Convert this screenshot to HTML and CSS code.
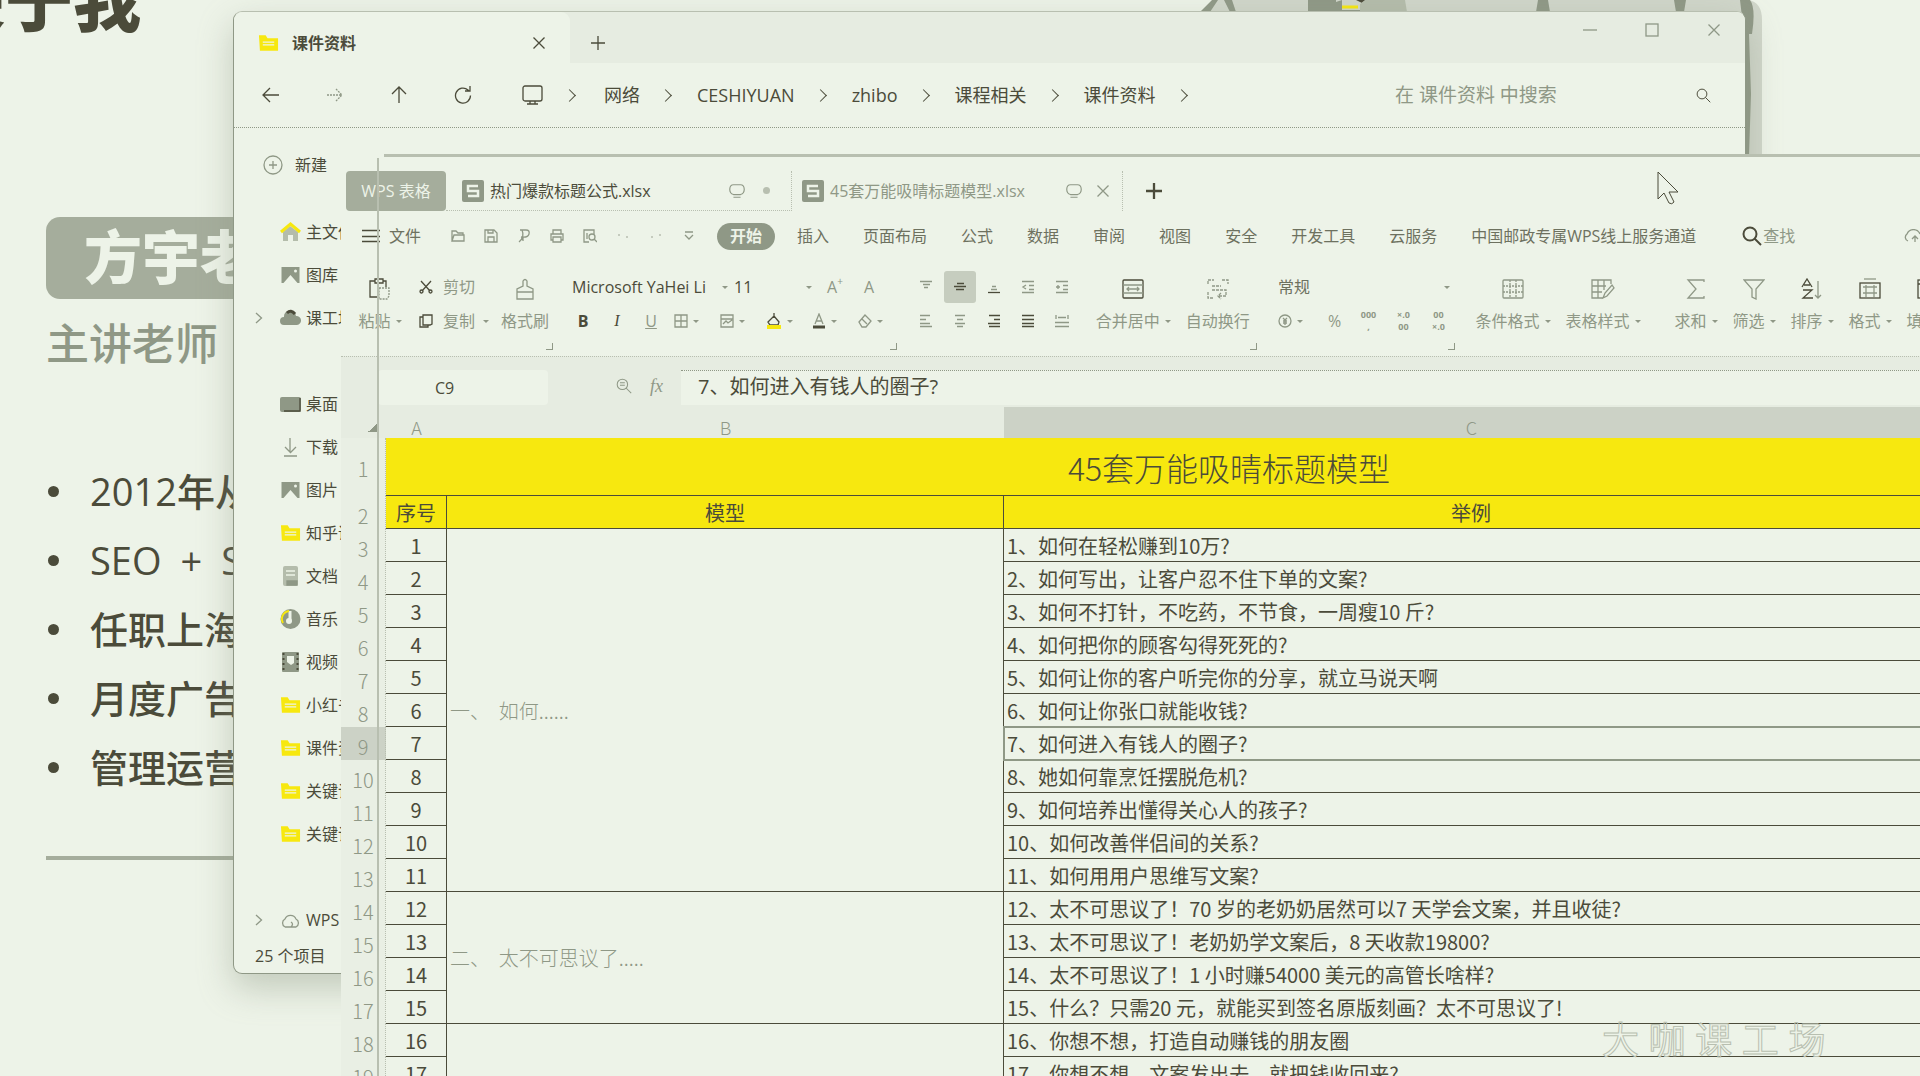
FILE: index.html
```html
<!DOCTYPE html>
<html lang="zh-CN">
<head>
<meta charset="utf-8">
<title>课件资料</title>
<link rel="stylesheet" href="styles.css">
</head>
<body>
<svg class="defs" aria-hidden="true">
  <symbol id="x" viewBox="0 0 14 14"><path d="M1.500 1.500l11 11M12.500 1.500l-11 11"/></symbol>
  <symbol id="plus" viewBox="0 0 14 14"><path d="M7 0v14M0 7h14"/></symbol>
  <symbol id="chev" viewBox="0 0 8 14"><path d="M1 2l5.500 5L1 12"/></symbol>
  <symbol id="folder" viewBox="0 0 22 18"><path fill="#f7e80f" stroke="none" d="M1 1h7l2 3h11v13H2z"/><path d="M5 8h12M5 11h12" stroke="#edf3e8"/></symbol>
  <symbol id="sheet" viewBox="0 0 22 22"><rect width="22" height="22" rx="2" fill="#8f9886" stroke="none"/><path d="M16 6H6v5h10v5H6" stroke="#edf3e8" stroke-width="2.500"/></symbol>
  <symbol id="monitor" viewBox="0 0 18 18"><path d="M5 13C-1 11 0 2 5 2h8c5 0 6 9 0 11zM5 16h8"/></symbol>
  <symbol id="lens" viewBox="0 0 20 20"><circle cx="8" cy="8" r="6.500"/><path d="M12.500 12.500L19 19"/></symbol>
  <symbol id="grid" viewBox="0 0 22 22"><rect x="1" y="2" width="20" height="18" rx="1"/><path d="M1 8h20M1 14h20M8 2v18M14 2v18" stroke-dasharray="2 1"/></symbol>
  <symbol id="picture" viewBox="0 0 20 20"><path fill="#8f9886" stroke="none" d="M1 2h18v16H1z"/><path fill="#edf3e8" stroke="none" d="M3 18l7-8 7 8z"/><circle cx="15" cy="6" r="1.500" fill="#edf3e8" stroke="none"/></symbol>
</svg>

<main class="desktop">
  <section class="slide">
    <h1>关于我</h1>
    <p class="badge">方宇老师</p>
    <p class="role">主讲老师</p>
    <ul>
      <li>2012年从</li>
      <li>SEO&ensp;+&ensp;S</li>
      <li>任职上海</li>
      <li>月度广告</li>
      <li>管理运营</li>
    </ul>
    <hr>
    <svg class="scene" viewBox="0 0 562 156" aria-hidden="true">
      <path d="M0 12L14 0h534q14 2 14 20v136h-18V12z" fill="#d0d6ca"/>
      <path d="M0 12L12 0h6L10 12zM24 0h8l4 12h-6zM108 0h28v12h-28zM136 2l6-2v10h18v2h-24zM338 0h10l2 12h-14zM474 0h12l-2 12h-8zM540 0h10q6 8 2 34h-8zM544 34h5l2 60-2 62h-5z" fill="#8f9886"/>
      <path d="M156 0h10l-4 3z" fill="#4b4b3a"/><path d="M142 7h16" stroke="#f7e80f" stroke-width="3"/>
      <path d="M160 4l5-4h40l2 12h-47z" fill="#b4bcab"/>
    </svg>
  </section>

  <section class="explorer">
    <header class="ex-title">
      <div class="ex-tab">
        <svg class="i" width="21" height="18"><use href="#folder"/></svg>
        <b>课件资料</b>
        <button aria-label="关闭标签页"><svg class="i dark" width="14" height="14"><use href="#x"/></svg></button>
      </div>
      <button class="new-tab" aria-label="新建标签页"><svg class="i dark" width="14" height="14"><use href="#plus"/></svg></button>
      <div class="win-btns">
        <button aria-label="最小化"><svg class="i" width="14" height="14" viewBox="0 0 14 14"><path d="M0 7h14"/></svg></button>
        <button aria-label="最大化"><svg class="i" width="14" height="14" viewBox="0 0 14 14"><rect x="1" y="1" width="12" height="12"/></svg></button>
        <button aria-label="关闭"><svg class="i" width="14" height="14"><use href="#x"/></svg></button>
      </div>
    </header>
    <nav class="ex-nav">
      <div class="arrows">
        <button aria-label="后退"><svg class="i dark" width="18" height="16" viewBox="0 0 18 16"><path d="M17 8H1M8 1L1 8l7 7"/></svg></button>
        <button aria-label="前进"><svg class="i" width="16" height="14" viewBox="0 0 16 14"><path d="M0 7h15M9 1l6 6-6 6" stroke-dasharray="2 1"/></svg></button>
        <button aria-label="上移"><svg class="i dark" width="16" height="18" viewBox="0 0 16 18"><path d="M8 17V1M1 8l7-7 7 7"/></svg></button>
        <button aria-label="刷新"><svg class="i dark" width="18" height="18" viewBox="0 0 18 18"><path d="M16.500 9.500A7.500 7.500 0 1 1 14 4l1 1M16 0v5h-5"/></svg></button>
      </div>
      <ol class="crumbs">
        <li><svg class="i dark" width="21" height="20" viewBox="0 0 21 20"><rect x="1" y="1" width="19" height="15" rx="2"/><path d="M5 19h11M8 16v3M13 16v3"/></svg></li>
        <li><a href="#">网络</a></li>
        <li><a href="#">CESHIYUAN</a></li>
        <li><a href="#">zhibo</a></li>
        <li><a href="#">课程相关</a></li>
        <li><a href="#">课件资料</a></li>
      </ol>
      <label class="ex-search"><input aria-label="搜索" placeholder="在 课件资料 中搜索"><svg class="i dark" width="15" height="15"><use href="#lens"/></svg></label>
    </nav>
    <div class="ex-side">
      <button class="new"><svg class="i" width="20" height="20" viewBox="0 0 20 20"><circle cx="10" cy="10" r="9"/><path d="M10 6v8M6 10h8"/></svg>新建</button>
      <ul>
        <li><i></i><svg class="i" width="21" height="20" viewBox="0 0 21 20"><path d="M3 10l7-6 8 6v9h-5v-6H8v6H3z" fill="#b4bcab" stroke="none"/><path d="M1 10l9.500-8 9.500 8" stroke="#f7e80f" stroke-width="3"/></svg>主文件夹</li>
        <li><i></i><svg class="i" width="21" height="20"><use href="#picture"/></svg>图库</li>
        <li><svg class="i" width="8" height="14"><use href="#chev"/></svg><svg class="i" width="21" height="20" viewBox="0 0 21 20"><path d="M4 17a4 4 0 0 1 0-8 6 6 0 0 1 12-1 4.500 4.500 0 0 1 1 9z" fill="#8f9886" stroke="none"/><path d="M7 5q4-4 8 1" stroke="#4b4b3a" stroke-width="3"/></svg>课工场</li>
        <li class="gap"></li>
        <li><i></i><svg class="i" width="21" height="20" viewBox="0 0 21 20"><rect x="0" y="3" width="21" height="15" rx="2" fill="#8f9886" stroke="none"/><path d="M4 17h16V4" stroke="#4b4b3a"/></svg>桌面</li>
        <li><i></i><svg class="i" width="21" height="20" viewBox="0 0 21 20"><path d="M10 1v14M5 10l5.500 5.500L16 10M4 19h13"/></svg>下载</li>
        <li><i></i><svg class="i" width="21" height="20"><use href="#picture"/></svg>图片</li>
        <li><i></i><svg class="i" width="21" height="18"><use href="#folder"/></svg>知乎课</li>
        <li><i></i><svg class="i" width="21" height="20" viewBox="0 0 21 20"><rect x="3" width="15" height="20" rx="2" fill="#b4bcab" stroke="none"/><path d="M6 5h9M6 9h9" stroke="#edf3e8"/><path d="M7 15h10v4H7z" fill="#8f9886"/></svg>文档</li>
        <li><i></i><svg class="i" width="21" height="20" viewBox="0 0 21 20"><circle cx="10.500" cy="10" r="10" fill="#8f9886" stroke="none"/><path d="M10 2v9" stroke="#edf3e8" stroke-width="3"/><circle cx="9" cy="12" r="3" fill="#edf3e8" stroke="none"/><path d="M3 14a8 8 0 0 1 6-12" stroke="#f7e80f" stroke-width="2"/></svg>音乐</li>
        <li><i></i><svg class="i" width="21" height="20" viewBox="0 0 21 20"><rect x="2" width="17" height="20" rx="1" fill="#8f9886" stroke="none"/><path d="M7 4h7v7l-3 2-4-3z" fill="#edf3e8" stroke="none"/><path d="M3.500 1v18M17.500 1v18" stroke="#4b4b3a" stroke-dasharray="2 3" stroke-width="2"/></svg>视频</li>
        <li><i></i><svg class="i" width="21" height="18"><use href="#folder"/></svg>小红书</li>
        <li><i></i><svg class="i" width="21" height="18"><use href="#folder"/></svg>课件资料</li>
        <li><i></i><svg class="i" width="21" height="18"><use href="#folder"/></svg>关键词</li>
        <li><i></i><svg class="i" width="21" height="18"><use href="#folder"/></svg>关键词</li>
        <li class="gap"></li>
        <li><svg class="i" width="8" height="14"><use href="#chev"/></svg><svg class="i" width="21" height="20" viewBox="0 0 21 20"><path d="M5 17a4.500 4.500 0 0 1 0-8 6 6 0 0 1 11 0 4.500 4.500 0 0 1 0 8h-5q3-3 0-5M5 17h7"/></svg>WPS</li>
      </ul>
      <p>25 个项目</p>
    </div>
  </section>

  <section class="wps">
    <header class="tabs">
      <button class="home">WPS 表格</button>
      <div class="tab"><svg class="i" width="22" height="22"><use href="#sheet"/></svg><span>热门爆款标题公式.xlsx</span><svg class="i mon" width="16" height="16"><use href="#monitor"/></svg><em></em></div>
      <div class="tab on"><svg class="i" width="22" height="22"><use href="#sheet"/></svg><span>45套万能吸晴标题模型.xlsx</span><svg class="i mon" width="16" height="16"><use href="#monitor"/></svg><button aria-label="关闭"><svg class="i" width="14" height="14"><use href="#x"/></svg></button></div>
      <button class="add" aria-label="新建"><svg class="i dark bold" width="16" height="16" viewBox="0 0 14 14"><use href="#plus"/></svg></button>
    </header>

    <nav class="menu">
      <button class="file"><svg class="i dark" width="18" height="14" viewBox="0 0 18 14"><path d="M0 1.500h18M0 7.500h18M0 12.500h18"/></svg>文件</button>
      <div class="quick">
        <button aria-label="打开"><svg class="i" width="14" height="14" viewBox="0 0 14 14"><path d="M1 12V2h4l2 2h5v2M1 12l2-6h10v6z"/></svg></button>
        <button aria-label="保存"><svg class="i" width="14" height="14" viewBox="0 0 14 14"><path d="M1 1h9l3 3v9H1zM4 1v3h5V1M4 13V8h6v5"/></svg></button>
        <button aria-label="输出"><svg class="i" width="14" height="14" viewBox="0 0 14 14"><path d="M3 1h6q4 0 3 4t-8 3M5 1q3 7-3 12M6 8v4"/></svg></button>
        <button aria-label="打印"><svg class="i" width="14" height="14" viewBox="0 0 14 14"><path d="M3 5V1h8v4M3 11H1V5h12v6h-2M3 8h8v5H3z"/></svg></button>
        <button aria-label="预览"><svg class="i" width="14" height="14" viewBox="0 0 14 14"><path d="M6 13H1V1h10v4M4 4v6"/><circle cx="9" cy="8" r="3"/><path d="M11 10l3 3"/></svg></button>
        <button aria-label="撤销"><svg class="i faint" width="12" height="8" viewBox="0 0 12 8"><path d="M1 3h2M9 5h2"/></svg></button>
        <button aria-label="恢复"><svg class="i faint" width="12" height="8" viewBox="0 0 12 8"><path d="M1 5h2M9 3h2"/></svg></button>
        <button aria-label="更多"><svg class="i" width="10" height="10" viewBox="0 0 10 10"><path d="M1 1h8M1 4l4 4 4-4"/></svg></button>
      </div>
      <a class="pill" href="#">开始</a>
      <div class="links">
        <a href="#">插入</a><a href="#">页面布局</a><a href="#">公式</a><a href="#">数据</a><a href="#">审阅</a><a href="#">视图</a><a href="#">安全</a><a href="#">开发工具</a><a href="#">云服务</a><a href="#">中国邮政专属WPS线上服务通道</a>
      </div>
      <button class="find"><svg class="i dark bold" width="20" height="20"><use href="#lens"/></svg>查找</button>
      <svg class="i cloud" width="24" height="14" viewBox="0 0 24 14"><path d="M5 12a4 4 0 0 1-1-7 7 7 0 0 1 13 0M12 8v5M9 10l3-3 3 3"/></svg>
    </nav>

    <div class="ribbon">
      <div class="group clip">
        <button class="big"><svg class="i dark" width="22" height="22" viewBox="0 0 22 22"><path d="M6 3H1v16h7M14 3h3v6M6 1h8v4H6z"/><path d="M10 10h10v8l-2 3h-8z" stroke="#8f9886" stroke-dasharray="2 1"/></svg><span class="drop">粘贴</span></button>
        <div class="stack">
          <button><svg class="i dark" width="14" height="14" viewBox="0 0 14 14"><path d="M2 1l9 10M12 1L3 11"/><circle cx="2.500" cy="11.500" r="1.500"/><circle cx="11.500" cy="11.500" r="1.500"/></svg>剪切</button>
          <button class="drop"><svg class="i dark" width="14" height="14" viewBox="0 0 14 14"><path d="M4 1h9v9l-2 1H4zM4 3H1v10h8v-2"/></svg>复制</button>
        </div>
        <button class="big"><svg class="i" width="20" height="22" viewBox="0 0 20 22"><path d="M8 8V3q2-3 4 0v5l6 3v10H2V11zM2 14h16"/></svg><span>格式刷</span></button>
      </div>
      <div class="group font">
        <div class="line">
          <label class="pick face"><select aria-label="字体"><option>Microsoft YaHei Li</option></select></label>
          <label class="pick size"><select aria-label="字号"><option>11</option></select></label>
          <button aria-label="增大字号" class="lt">A<sup>+</sup></button><button aria-label="减小字号" class="lt">A</button>
        </div>
        <div class="line">
          <button class="lt dk"><b>B</b></button><button class="lt dk serif"><em>I</em></button><button class="lt"><u>U</u></button>
          <button class="split drop" aria-label="边框"><svg class="i" width="14" height="14" viewBox="0 0 14 14"><path d="M1 1h12v12H1zM7 1v12M1 7h12"/></svg></button>
          <button class="split drop" aria-label="样式"><svg class="i" width="14" height="14" viewBox="0 0 14 14"><path d="M1 1h12v12H1zM1 5h12M3 10l3-3 2 2 4-3"/></svg></button>
          <button class="split drop" aria-label="填充颜色"><svg class="i dark" width="16" height="16" viewBox="0 0 16 16"><path d="M2 9l6-6 5 6-1 3H4zM8 3V0"/><path d="M1 14h14" stroke="#f7e80f" stroke-width="4"/></svg></button>
          <button class="split drop" aria-label="字体颜色"><svg class="i" width="14" height="16" viewBox="0 0 14 16"><path d="M3 11L7 1l4 10M4 8h6"/><path d="M1 14h12" stroke="#4b4b3a" stroke-width="3"/></svg></button>
          <button class="split drop" aria-label="清除"><svg class="i" width="14" height="14" viewBox="0 0 14 14"><path d="M1 8l6-7 6 6-5 6H4zM4 5l5 5"/></svg></button>
        </div>
      </div>
      <div class="group align">
        <div class="cells">
          <button aria-label="顶端对齐"><svg class="i" width="12" height="14" viewBox="0 0 12 14"><path d="M0 1.500h12M3 4.500h7M4 7.500h4"/></svg></button>
          <button class="on" aria-label="垂直居中"><svg class="i dark" width="12" height="14" viewBox="0 0 12 14"><path d="M3 3.500h7M0 6.500h12M2 9.500h8"/></svg></button>
          <button aria-label="底端对齐"><svg class="i" width="12" height="14" viewBox="0 0 12 14"><path d="M4 6.500h4M3 9.500h6"/><path d="M0 12.500h12" stroke="#4b4b3a"/></svg></button>
          <button aria-label="减少缩进"><svg class="i" width="14" height="14" viewBox="0 0 14 14"><path d="M1 1.500h12M8 5.500h5M8 9.500h5M1 12.500h12M5 5L2 7l3 2"/></svg></button>
          <button aria-label="增加缩进"><svg class="i" width="14" height="14" viewBox="0 0 14 14"><path d="M1 1.500h12M8 5.500h5M8 9.500h5M1 12.500h12M1 7h4M3 5v4"/></svg></button>
          <button aria-label="左对齐"><svg class="i" width="12" height="14" viewBox="0 0 12 14"><path d="M0 1.500h10M0 5.500h6M0 9.500h10M0 12.500h12"/></svg></button>
          <button aria-label="居中"><svg class="i" width="12" height="14" viewBox="0 0 12 14"><path d="M1 1.500h10M3 5.500h6M1 9.500h10M3 12.500h6"/></svg></button>
          <button aria-label="右对齐"><svg class="i dark" width="12" height="14" viewBox="0 0 12 14"><path d="M1 1.500h11M6 5.500h6M0 9.500h12M1 12.500h11"/></svg></button>
          <button aria-label="两端对齐"><svg class="i dark" width="12" height="14" viewBox="0 0 12 14"><path d="M0 1.500h12M0 5.500h12M0 9.500h12M0 12.500h12"/></svg></button>
          <button aria-label="分散对齐"><svg class="i" width="14" height="14" viewBox="0 0 14 14"><path d="M1 1v4M13 1v4M3 3.500h8M0 8.500h14M0 12.500h14"/></svg></button>
        </div>
        <button class="big"><svg class="i dark" width="22" height="22" viewBox="0 0 22 22"><rect x="1" y="2" width="20" height="18" rx="1"/><path d="M1 7h20M1 15h20M5 11h12M7 9l-2 2 2 2M15 9l2 2-2 2" stroke="#8f9886"/></svg><span class="drop">合并居中</span></button>
        <button class="big"><svg class="i" width="22" height="22" viewBox="0 0 22 22"><path d="M1 6V2h6M15 2h6v4M1 14v6h5M5 8h9M5 12h14v6h-7M14 15l-3 3 3 3" stroke-dasharray="3 1"/></svg><span>自动换行</span></button>
      </div>
      <div class="group number">
        <div class="line"><label class="pick format"><select aria-label="数字格式"><option>常规</option></select></label></div>
        <div class="line">
          <button class="split drop" aria-label="货币"><svg class="i" width="14" height="14" viewBox="0 0 14 14"><circle cx="7" cy="7" r="6"/><path d="M5 4l2 2 2-2M5 7h4M5 9h4M7 6v5"/></svg></button>
          <button class="lt">%</button>
          <button class="tiny">000<br>,</button><button class="tiny">×.0<br>00</button><button class="tiny">00<br>×.0</button>
        </div>
      </div>
      <div class="group styles">
        <button class="big"><svg class="i" width="22" height="22"><use href="#grid"/></svg><span class="drop">条件格式</span></button>
        <button class="big"><svg class="i" width="24" height="22" viewBox="0 0 24 22"><path d="M12 20H1V2h19v4M1 8h14M1 14h10M7 2v18M13 2v10M12 20l2-5 7-8 2 3-7 8z"/></svg><span class="drop">表格样式</span></button>
      </div>
      <div class="group edit">
        <button class="big"><svg class="i" width="20" height="22" viewBox="0 0 20 22"><path d="M18 4V2H2l8 9-8 9h16v-2"/></svg><span class="drop">求和</span></button>
        <button class="big"><svg class="i" width="22" height="22" viewBox="0 0 22 22"><path d="M1 2h20l-8 9v10l-4-2v-8z"/></svg><span class="drop">筛选</span></button>
        <button class="big"><svg class="i" width="22" height="22" viewBox="0 0 22 22"><path d="M1 9L6 1l5 8M3 7h6M2 12h9l-9 8h10" stroke="#4b4b3a"/><path d="M17 3v17M14 17l3 3 3-3"/></svg><span class="drop">排序</span></button>
        <button class="big"><svg class="i" width="22" height="22" viewBox="0 0 22 22"><path d="M5 1h12" /><rect x="1" y="5" width="20" height="15" stroke="#4b4b3a"/><path d="M4 9h14M4 15h14M7 7v12M15 7v12"/></svg><span class="drop">格式</span></button>
        <button class="big"><svg class="i dark" width="22" height="22" viewBox="0 0 22 22"><rect x="1" y="2" width="20" height="18"/><path d="M1 6h20M11 6v10"/></svg><span class="drop">填充</span></button>
      </div>
    </div>

    <div class="formula">
      <input class="cell-name" aria-label="名称框" value="C9">
      <div class="fx"><svg class="i" width="16" height="16" viewBox="0 0 20 20"><use href="#lens"/><path d="M5 6h6M5 9h6"/></svg><em>fx</em></div>
      <input class="expr" aria-label="编辑栏" value="7、如何进入有钱人的圈子?">
    </div>

    <table>
      <colgroup><col class="c0"><col class="ca"><col class="cb"><col class="cc"><col class="cd"></colgroup>
      <thead><tr><th class="corner"></th><th>A</th><th>B</th><th class="sel">C</th><th>D</th></tr></thead>
      <tbody>
        <tr class="title"><th>1</th><td colspan="4">45套万能吸晴标题模型</td></tr>
        <tr class="head"><th>2</th><td>序号</td><td>模型</td><td>举例</td><td></td></tr>
        <tr><th>3</th><td>1</td><td rowspan="11" class="model">一、&nbsp;&nbsp;如何......</td><td>1、如何在轻松赚到10万?</td><td></td></tr>
        <tr><th>4</th><td>2</td><td>2、如何写出，让客户忍不住下单的文案?</td><td></td></tr>
        <tr><th>5</th><td>3</td><td>3、如何不打针，不吃药，不节食，一周瘦10 斤?</td><td></td></tr>
        <tr><th>6</th><td>4</td><td>4、如何把你的顾客勾得死死的?</td><td></td></tr>
        <tr><th>7</th><td>5</td><td>5、如何让你的客户听完你的分享，就立马说天啊</td><td></td></tr>
        <tr><th>8</th><td>6</td><td>6、如何让你张口就能收钱?</td><td></td></tr>
        <tr><th class="sel">9</th><td>7</td><td class="active">7、如何进入有钱人的圈子?</td><td></td></tr>
        <tr><th>10</th><td>8</td><td>8、她如何靠烹饪摆脱危机?</td><td></td></tr>
        <tr><th>11</th><td>9</td><td>9、如何培养出懂得关心人的孩子?</td><td></td></tr>
        <tr><th>12</th><td>10</td><td>10、如何改善伴侣间的关系?</td><td></td></tr>
        <tr><th>13</th><td>11</td><td>11、如何用用户思维写文案?</td><td></td></tr>
        <tr><th>14</th><td>12</td><td rowspan="4" class="model">二、&nbsp;&nbsp;太不可思议了.....</td><td>12、太不可思议了！70 岁的老奶奶居然可以7 天学会文案，并且收徒?</td><td></td></tr>
        <tr><th>15</th><td>13</td><td>13、太不可思议了！老奶奶学文案后，8 天收款19800?</td><td></td></tr>
        <tr><th>16</th><td>14</td><td>14、太不可思议了！1 小时赚54000 美元的高管长啥样?</td><td></td></tr>
        <tr><th>17</th><td>15</td><td>15、什么？只需20 元，就能买到签名原版刻画？太不可思议了!</td><td></td></tr>
        <tr><th>18</th><td>16</td><td rowspan="2" class="model"></td><td>16、你想不想，打造自动赚钱的朋友圈</td><td></td></tr>
        <tr><th>19</th><td>17</td><td>17、你想不想，文案发出去，就把钱收回来?</td><td></td></tr>
      </tbody>
    </table>
  </section>

  <p class="watermark">大 咖 课 工 场</p>
  <svg class="cursor" width="22" height="35" viewBox="0 0 22 35" aria-hidden="true"><path d="M1 1v27l6-6 5 10q3 2 5-1l-5-10h9z" fill="#edf3e8" stroke="#4b4b3a"/></svg>
</main>
</body>
</html>
```
FILE: styles.css
```css
:root {
  --bg: #edf3e8;
  --dark: #4b4b3a;
  --mid: #8f9886;
  --soft: #b8bfb0;
  --tint: #e6ece1;
  --yellow: #f7e80f;
}
* { box-sizing: border-box; }
body {
  margin: 0;
  background: var(--bg);
  color: var(--dark);
  font: 16px/24px "Open Sans", "Noto Sans CJK SC", sans-serif;
}
h1, p, ul, ol { margin: 0; padding: 0; }
ul, ol { list-style: none; }
a { color: inherit; text-decoration: none; white-space: nowrap; }
button {
  display: flex; align-items: center; justify-content: center;
  padding: 0; border: 0; background: none; color: inherit; font: inherit;
  white-space: nowrap;
}
input, select {
  padding: 0; border: 0; background: none; color: inherit; font: inherit;
  appearance: none; outline: 0; min-width: 0;
}
.defs { position: absolute; width: 0; height: 0; }
.i { fill: none; stroke: var(--mid); stroke-width: 1.3; flex: none; }
.i.dark { stroke: var(--dark); }
.i.bold { stroke-width: 2; }
.i.faint { stroke: var(--soft); }

.desktop { position: relative; height: 100vh; overflow: hidden; }

/* presentation slide at the back */
.slide { display: flow-root; padding-left: 46px; }
.slide h1 {
  height: 261px; margin: -44px 0 0 -109px;
  font-size: 68px; line-height: 88px; font-weight: 900;
}
.badge {
  width: 260px; height: 82px; padding-left: 38px;
  border-radius: 14px; background: #a5ad9c; color: var(--bg);
  font-size: 58px; line-height: 80px; font-weight: 900; white-space: nowrap;
}
.role { margin-top: 15px; color: var(--mid); font-size: 43px; line-height: 60px; font-weight: 500; }
.slide ul { margin-top: 83px; }
.slide li {
  display: flex; align-items: center; gap: 31px; height: 69px; padding-left: 2px;
  font-size: 38px; line-height: 69px; font-weight: 500; white-space: nowrap;
}
.slide li::before { content: ""; width: 11px; height: 11px; border-radius: 50%; background: var(--dark); }
.slide hr { width: 220px; height: 4px; margin: 54px 0 0; border: 0; background: #a5ad9c; }
.scene { position: absolute; left: 1200px; top: 0; width: 562px; height: 156px; }

/* file explorer */
.explorer {
  position: absolute; left: 233px; top: 11px; width: 1513px; height: 963px;
  border: 1px solid var(--mid); border-top-color: var(--soft); border-radius: 9px;
  background: var(--bg);
  box-shadow: 0 14px 34px rgba(143, 152, 134, .45);
}
.ex-title { display: flex; height: 51px; background: var(--tint); border-radius: 9px 9px 0 0; }
.ex-tab {
  display: flex; align-items: center; width: 336px; padding: 10px 24px 0; gap: 13px;
  background: var(--bg); border-radius: 9px 9px 0 0;
}
.ex-tab button { margin-left: auto; }
.new-tab { width: 56px; padding-top: 10px; }
.win-btns { display: flex; gap: 48px; margin: 0 24px 15px auto; }
.ex-nav {
  display: flex; align-items: center; height: 65px;
  border-bottom: 1px dotted var(--mid); font-size: 18px;
}
.arrows { display: flex; padding-left: 5px; }
.arrows button { width: 64px; }
.crumbs { display: flex; align-items: center; margin-left: 27px; }
.crumbs li { display: flex; align-items: center; }
.crumbs li::after {
  content: ""; width: 8px; height: 8px; margin: 0 27px 0 21px;
  border: solid var(--dark); border-width: 1px 1px 0 0; transform: rotate(45deg);
}
.crumbs li:first-child::after { margin: 0 30px 0 22px; }
.ex-search { display: flex; align-items: center; width: 316px; margin: 0 34px 0 auto; justify-content: space-between; }
.ex-search input { width: 240px; font-size: 19px; }
.ex-search ::placeholder { color: var(--mid); opacity: 1; }
.ex-side { padding: 25px 0 0 21px; }
.ex-side .new { gap: 12px; margin-left: 8px; }
.ex-side ul { margin-top: 33px; }
.ex-side li { display: flex; align-items: center; height: 43px; white-space: nowrap; }
.ex-side li > :first-child { width: 8px; margin: 0 17px 0 0; }
.ex-side li > svg + svg, .ex-side li > i + svg { margin-right: 5px; }
.ex-side p { margin-top: 3px; }

/* spreadsheet window, hanging off the right edge */
.wps {
  position: absolute; left: 341px; top: 154px; right: -153px; bottom: 0;
  overflow: hidden; background: var(--bg);
}
.wps::before { content: ""; position: absolute; left: 43px; right: 0; top: 0; height: 3px; background: var(--soft); }
.wps::after { content: ""; position: absolute; left: 36px; top: 4px; bottom: 0; width: 2px; background: var(--soft); }
.tabs { display: flex; height: 57px; padding: 17px 0 0 5px; }
.home { width: 100px; height: 40px; border-radius: 4px; background: #a5ad9c; color: var(--bg); }
.tab { display: flex; align-items: center; gap: 6px; height: 40px; padding-left: 13px; color: var(--mid); }
.tab:not(.on) { width: 346px; margin-right: -3px; padding-left: 16px; border: dotted var(--soft); border-width: 0 1px 1px 0; color: var(--dark); }
.tab.on { width: 334px; padding-right: 4px; border-right: 1px dotted var(--soft); }
.mon { margin-left: auto; }
.tab button { width: 30px; }
.tab em { width: 7px; height: 7px; margin: 0 21px 0 12px; border-radius: 50%; background: var(--soft); }
.add { width: 62px; }

.menu { display: flex; align-items: center; height: 50px; padding-left: 21px; }
.file { gap: 9px; color: #6d715f; }
.quick { display: flex; margin-left: 20px; }
.quick button { width: 33px; }
.pill { margin: 0 22px 0 12px; padding: 0 13px; border-radius: 14px; background: var(--mid); color: var(--bg); font-weight: 700; line-height: 27px; }
.links { display: flex; gap: 34px; color: #6d715f; }
.find { margin-left: 46px; gap: 1px; color: var(--mid); }
.cloud { margin-left: 108px; }

.ribbon { display: flex; height: 95px; color: var(--mid); }
.group { position: relative; display: flex; flex: none; height: 91px; padding-top: 9px; }
.group:not(.styles):not(.edit)::after {
  content: ""; position: absolute; right: 3px; bottom: 2px; width: 6px; height: 6px;
  border: solid var(--mid); border-width: 0 1px 1px 0;
}
.big { display: grid; grid-template-rows: 34px 34px; place-items: center; align-self: start; }
.big .i { margin-top: 4px; }
.drop::after {
  content: ""; display: inline-block; flex: none; margin-left: 5px; vertical-align: 4px;
  border: solid transparent; border-width: 3px 3px 0; border-top-color: var(--mid);
}
.line { display: flex; height: 34px; align-items: center; }
.clip { width: 215px; }
.clip .big:first-child { width: 78px; }
.clip .big:last-child { width: 60px; }
.stack { display: grid; grid-template-rows: 34px 34px; align-self: start; width: 76px; }
.stack button { justify-content: start; gap: 10px; }
.stack button.drop::after { margin-left: -2px; }
.font { display: block; width: 344px; padding-left: 10px; }
.pick { display: flex; align-items: center; color: var(--dark); }
.pick select { flex: 1; }
.pick::after { content: ""; border: solid transparent; border-width: 3px 3px 0; border-top-color: var(--mid); }
.face { width: 156px; margin-left: 6px; }
.size { width: 78px; margin: 0 6px; }
.lt { width: 34px; }
.lt sup { font-size: 10px; line-height: 12px; align-self: start; }
.dk { color: var(--dark); }
.serif { font-family: "Liberation Serif", serif; }
.split { width: 46px; padding: 0 6px; justify-content: start; }
.align { width: 360px; padding-left: 9px; }
.cells { display: grid; grid-template: 34px 34px / repeat(5, 34px); align-self: start; }
.cells .on { background: #c6cdbf; border-radius: 3px; margin: 1px; }
.align .big { width: 86px; }
.align .cells + .big { margin-left: 12px; }
.number { display: block; width: 198px; padding-left: 12px; }
.format { width: 172px; margin-left: 6px; color: #6d715f; }
.number .lt { width: 33px; }
.tiny { width: 35px; font-size: 9px; line-height: 12px; font-weight: 700; }
.styles { width: 199px; padding-left: 10px; }
.styles .big { width: 90px; }
.edit { padding-left: 10px; }
.edit .big { width: 58px; }

.formula { display: flex; height: 51px; border-top: 1px dotted var(--soft); background: var(--tint); }
.cell-name { width: 170px; margin: 13px 0 2px 37px; padding-left: 57px; border-radius: 4px; background: var(--bg); }
.fx { display: flex; align-items: center; gap: 18px; width: 133px; padding: 8px 0 0 68px; color: var(--mid); font-family: "Liberation Serif", serif; font-size: 18px; }
.expr { flex: 1; margin: 13px 0 2px; padding: 0 0 3px 17px; border-top: 1px dotted var(--mid); background: var(--bg); font-size: 20px; }

table {
  width: 100%; table-layout: fixed; border-collapse: separate; border-spacing: 0;
  font: 20px/28px "Noto Sans CJK SC", sans-serif;
}
.c0 { width: 45px; }
.ca { width: 61px; }
.cb { width: 557px; }
.cd { width: 134px; }
th { padding: 0; font-weight: 300; color: var(--mid); background: #e9efe4; }
thead th { height: 31px; background: var(--tint); font-size: 18px; line-height: 20px; padding-top: 8px; }
thead .sel { background: #ccd2c6; }
.corner::after {
  content: ""; display: block; margin: 0 7px 0 auto; width: 11px; height: 11px;
  background: linear-gradient(135deg, transparent 50%, var(--mid) 50%);
}
tbody tr { height: 33px; }
tbody th { border-right: 1px dotted var(--soft); vertical-align: bottom; line-height: 26px; }
tbody th.sel { background: #ccd2c6; }
td { padding: 1px 3px 0; border: solid var(--dark); border-width: 0 1px 1px 0; white-space: nowrap; }
td:nth-child(2) { text-align: center; }
td.model { text-align: left; color: var(--mid); font-weight: 300; }
.title { height: 58px; }
.title td { background: var(--yellow); font-size: 32px; line-height: 48px; font-weight: 300; }
.title th { vertical-align: middle; padding-top: 4px; }
.head td { background: var(--yellow); text-align: center; }
td.active { outline: 2px solid var(--mid); outline-offset: -1px; }

.watermark {
  position: absolute; left: 1602px; top: 1016px;
  font-size: 37px; line-height: 48px; color: transparent;
  -webkit-text-stroke: 1px var(--soft);
}
.cursor { position: absolute; left: 1657px; top: 171px; }
```
